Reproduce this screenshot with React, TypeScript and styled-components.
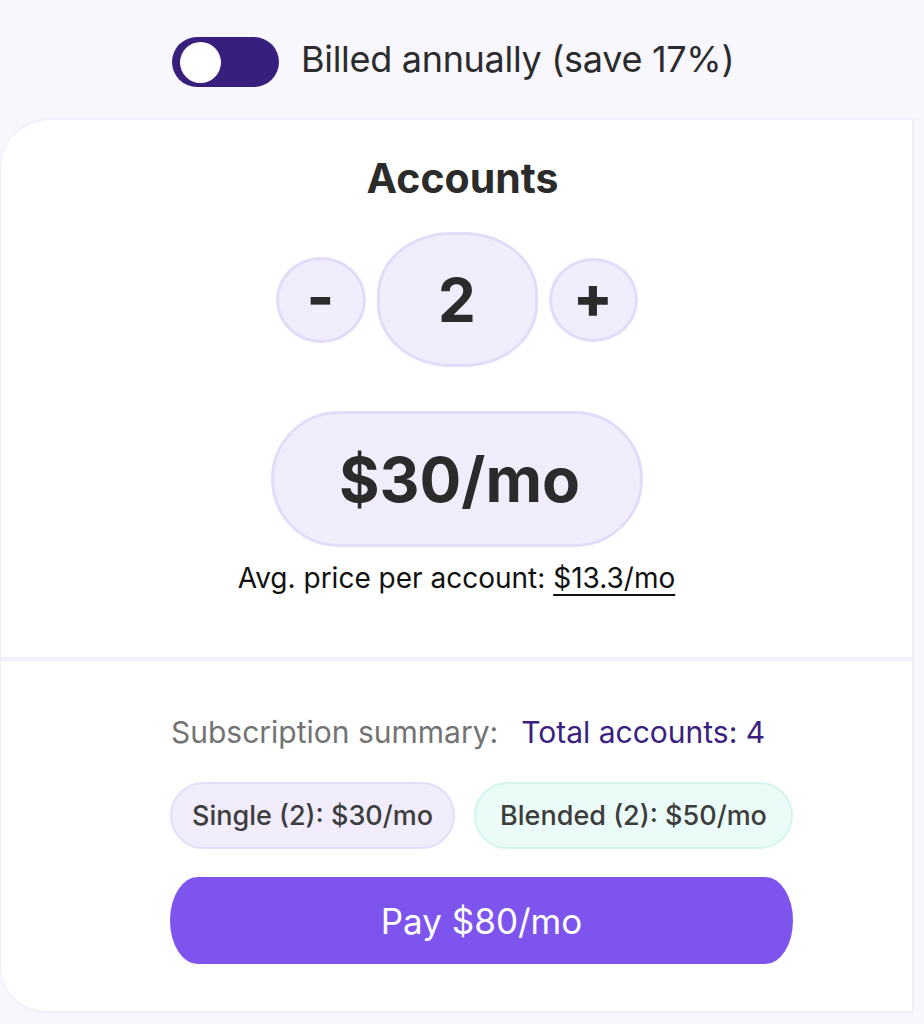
import React, { useState } from 'react';
import styled, { createGlobalStyle } from 'styled-components';

const GlobalStyle = createGlobalStyle`
  body {
    margin: 0;
    background: #f8f7fe;
    font-family: 'Inter', 'Noto Sans', sans-serif;
    color: #2b2b2b;
  }
`;

const Page = styled.div`
  width: 924px;
  height: 1024px;
  overflow: hidden;
  padding-top: 37px;
  box-sizing: border-box;
`;

const BillingRow = styled.div`
  display: flex;
  align-items: center;
  gap: 22px;
  padding-left: 172px;
  height: 50px;
`;

const Toggle = styled.button<{ $on: boolean }>`
  width: 107px;
  height: 50px;
  border: none;
  border-radius: 25px;
  background: #381f7e;
  padding: 0 8px;
  display: flex;
  align-items: center;
  justify-content: ${(p) => (p.$on ? 'flex-start' : 'flex-end')};
  cursor: pointer;
`;

const Knob = styled.span`
  width: 41px;
  height: 41px;
  border-radius: 50%;
  background: #fff;
`;

const BillingLabel = styled.span`
  font-size: 36px;
  line-height: 44px;
  margin-top: -6px;
  color: #2b2b2b;
  letter-spacing: -0.3px;
`;

const Card = styled.div`
  margin-top: 31px;
  width: 914px;
  height: 895px;
  box-sizing: border-box;
  background: #fff;
  border: 2px solid #f1eefc;
  border-left-width: 1px;
  border-radius: 50px 0 0 46px;
  display: flex;
  flex-direction: column;
`;

const TopSection = styled.section`
  height: 541px;
  box-sizing: border-box;
  padding-top: 34px;
  display: flex;
  flex-direction: column;
  align-items: center;
  border-bottom: 4px solid #f2effc;
`;

const Title = styled.h2`
  margin: 0;
  font-size: 41px;
  line-height: 48px;
  font-weight: 700;
  color: #2b2b2b;
  padding-left: 12px;
`;

const Stepper = styled.div`
  margin-top: 30px;
  display: flex;
  align-items: center;
  gap: 11px;
`;

const StepButton = styled.button<{ $w: number; $h: number }>`
  width: ${(p) => p.$w}px;
  height: ${(p) => p.$h}px;
  box-sizing: border-box;
  border-radius: 50%;
  border: 3px solid #e3dcf9;
  background: #f1edfd;
  font-family: inherit;
  font-size: 58px;
  line-height: 1;
  font-weight: 800;
  color: #2b2b2b;
  display: flex;
  align-items: center;
  justify-content: center;
  padding: 0 0 5px;
  cursor: pointer;
`;

const Count = styled.div`
  width: 161px;
  height: 135px;
  box-sizing: border-box;
  border-radius: 74px / 62px;
  border: 3px solid #e3dcf9;
  background: #f1edfd;
  font-size: 60px;
  font-weight: 700;
  display: flex;
  align-items: center;
  justify-content: center;
`;

const PricePill = styled.div`
  margin-top: 44px;
  width: 372px;
  height: 136px;
  box-sizing: border-box;
  border-radius: 68px;
  border: 3px solid #e3dcf9;
  background: #f1edfd;
  font-size: 62px;
  font-weight: 700;
  color: #2b2b2b;
  display: flex;
  align-items: center;
  justify-content: center;
  padding-left: 6px;
`;

const AvgLine = styled.p`
  margin: 15px 0 0;
  font-size: 28px;
  line-height: 32px;
  color: #111;
`;

const AvgValue = styled.span`
  text-decoration: underline;
  text-decoration-thickness: 2px;
  text-underline-offset: 6px;
`;

const BottomSection = styled.section`
  flex: 1;
  padding: 53px 0 0 169px;
  display: flex;
  flex-direction: column;
  width: 623px;
`;

const SummaryLine = styled.div`
  display: flex;
  gap: 23px;
  font-size: 30px;
  line-height: 36px;
  padding-left: 1px;
`;

const SummaryLabel = styled.span`
  color: #737373;
`;

const SummaryTotal = styled.span`
  color: #3a1f80;
`;

const Chips = styled.div`
  margin-top: 32px;
  display: flex;
  gap: 19px;
`;

const Chip = styled.div<{ $tone: 'violet' | 'mint'; $w: number }>`
  width: ${(p) => p.$w}px;
  height: 67px;
  box-sizing: border-box;
  border-radius: 34px;
  border: 2px solid ${(p) => (p.$tone === 'violet' ? '#e4def8' : '#d3f5ee')};
  background: ${(p) => (p.$tone === 'violet' ? '#f1edfd' : '#eafbf8')};
  display: flex;
  align-items: center;
  justify-content: center;
  font-size: 27px;
  font-weight: 500;
  color: #3d3d3d;
  white-space: nowrap;
`;

const PayButton = styled.button`
  margin-top: 28px;
  width: 623px;
  height: 87px;
  border: none;
  border-radius: 28px / 44px;
  background: #7e54ef;
  color: #fff;
  font-family: inherit;
  font-size: 35px;
  font-weight: 400;
  cursor: pointer;
`;

const App: React.FC = () => {
  const [annual, setAnnual] = useState(true);
  const [count, setCount] = useState(2);

  return (
    <Page>
      <GlobalStyle />
      <BillingRow>
        <Toggle $on={annual} onClick={() => setAnnual(!annual)} aria-label="Billing period">
          <Knob />
        </Toggle>
        <BillingLabel>Billed annually (save 17%)</BillingLabel>
      </BillingRow>

      <Card>
        <TopSection>
          <Title>Accounts</Title>
          <Stepper>
            <StepButton $w={90} $h={86} onClick={() => setCount(Math.max(1, count - 1))}>
              -
            </StepButton>
            <Count>{count}</Count>
            <StepButton $w={89} $h={84} onClick={() => setCount(count + 1)}>
              +
            </StepButton>
          </Stepper>
          <PricePill>$30/mo</PricePill>
          <AvgLine>
            Avg. price per account: <AvgValue>$13.3/mo</AvgValue>
          </AvgLine>
        </TopSection>

        <BottomSection>
          <SummaryLine>
            <SummaryLabel>Subscription summary:</SummaryLabel>
            <SummaryTotal>Total accounts: 4</SummaryTotal>
          </SummaryLine>
          <Chips>
            <Chip $tone="violet" $w={285}>Single (2): $30/mo</Chip>
            <Chip $tone="mint" $w={319}>Blended (2): $50/mo</Chip>
          </Chips>
          <PayButton>Pay $80/mo</PayButton>
        </BottomSection>
      </Card>
    </Page>
  );
};

export default App;
